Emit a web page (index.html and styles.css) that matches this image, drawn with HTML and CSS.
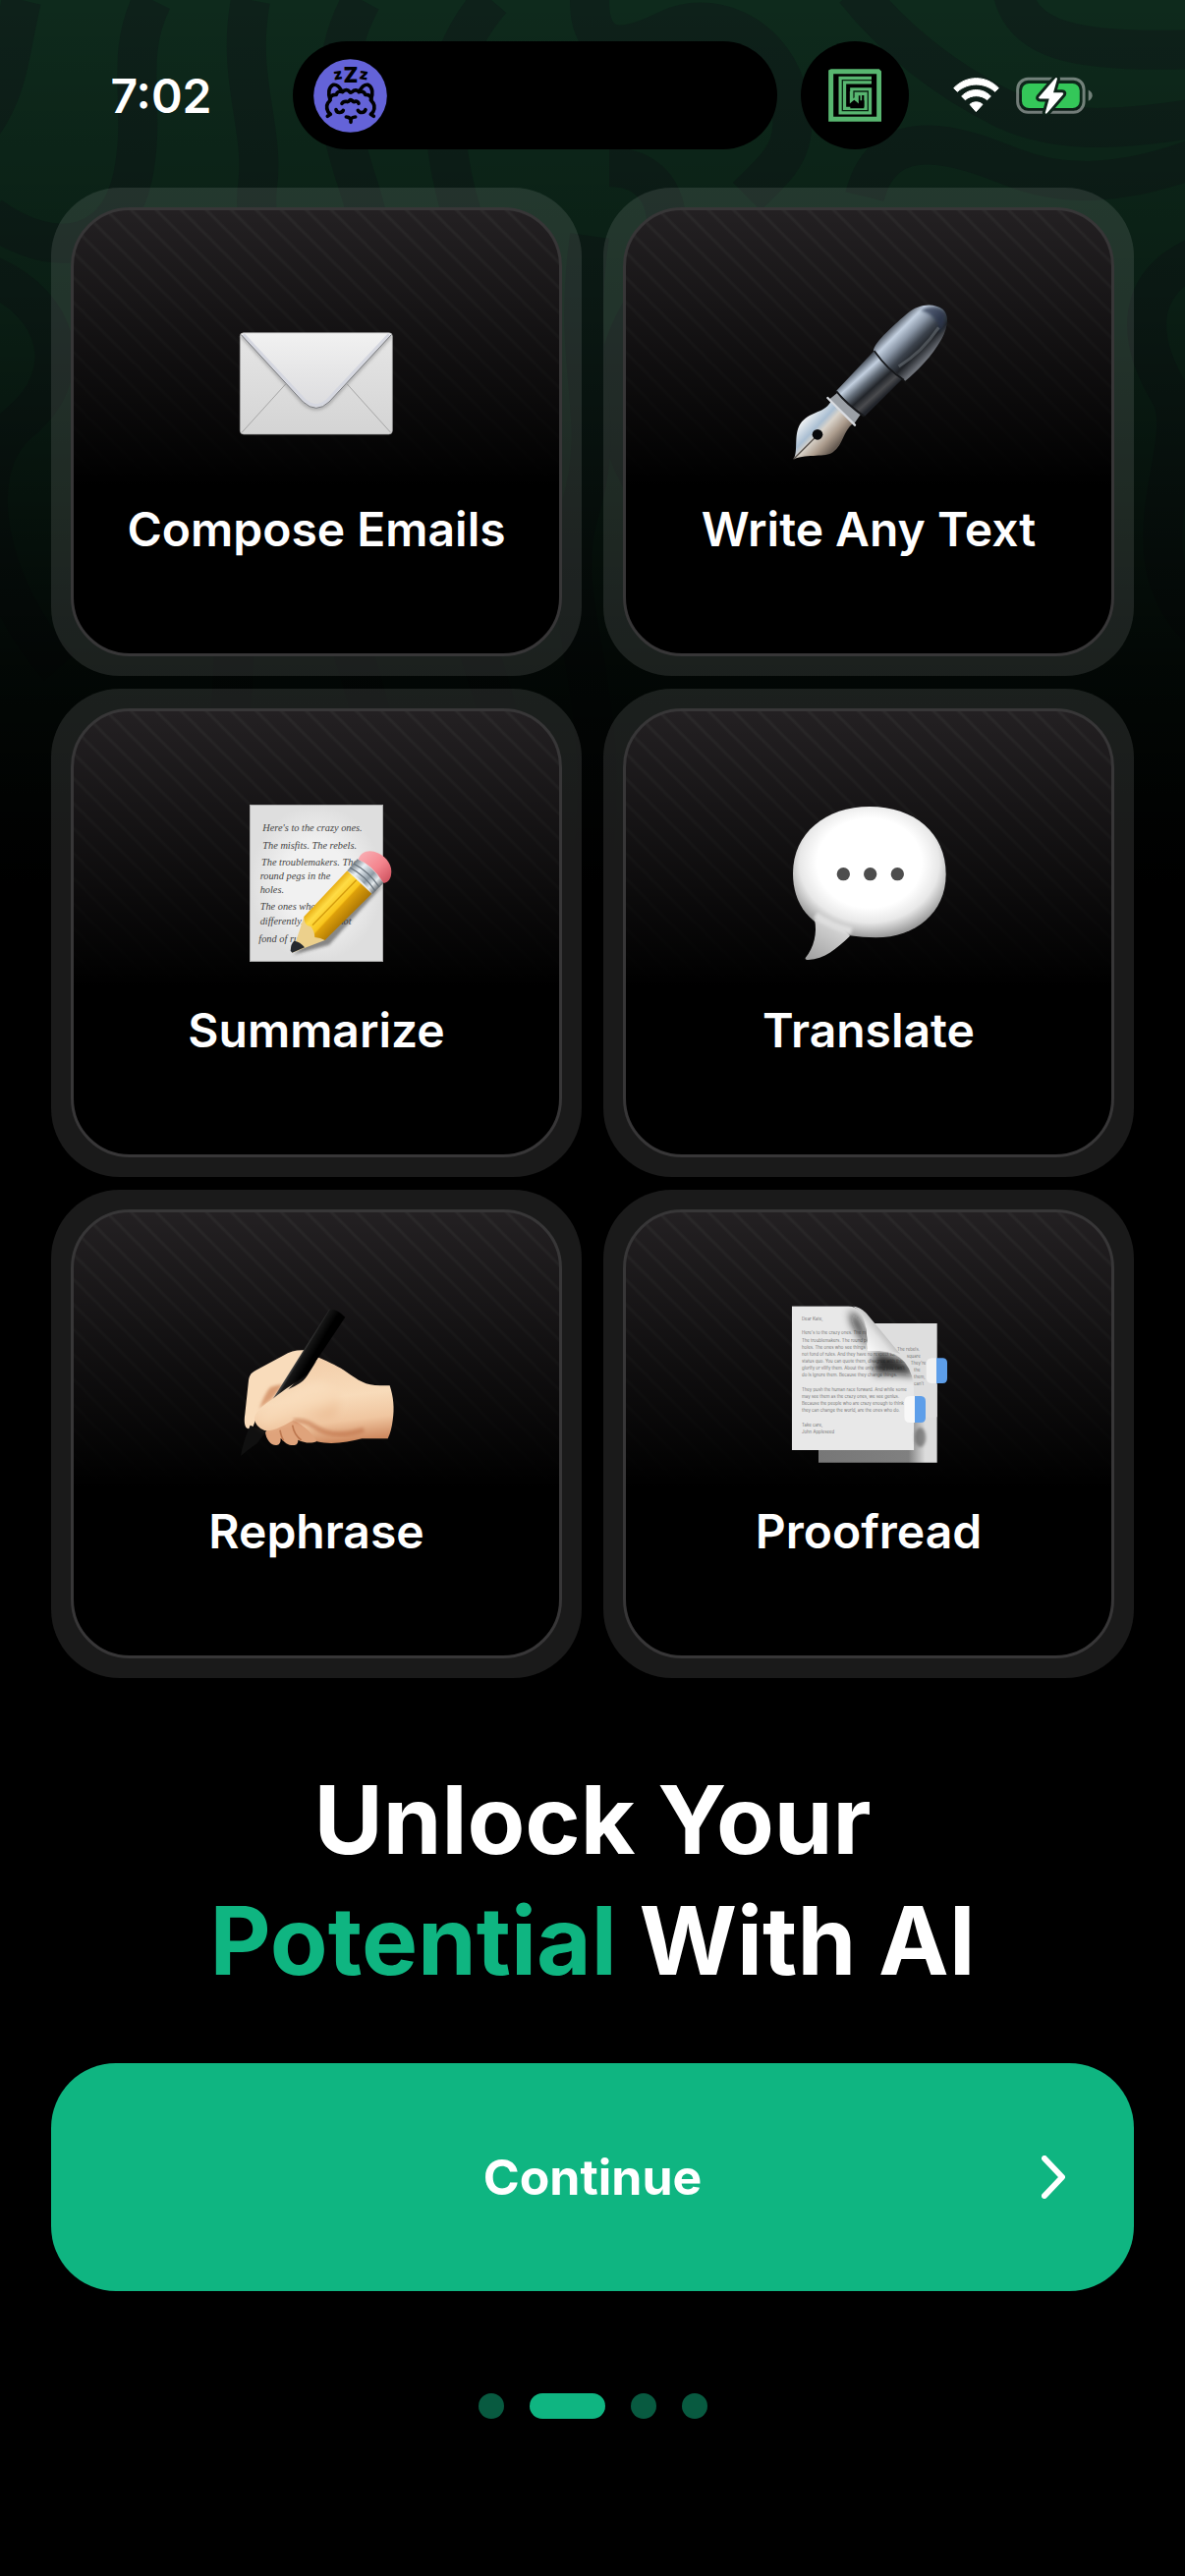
FILE: index.html
```
<!DOCTYPE html>
<html lang="en">

<head>
  <meta charset="UTF-8">
  <meta name="viewport" content="width=device-width">
  <title>Unlock Your Potential With AI</title>
  <link rel="stylesheet" href="styles.css">
</head>

<body>

  <svg class="backdrop" viewBox="0 0 1206 900" preserveAspectRatio="xMidYMin slice" aria-hidden="true">
    <defs>
      <linearGradient id="fade" x1="0" y1="0" x2="0" y2="1">
        <stop offset="0" stop-color="#000" stop-opacity="0" />
        <stop offset=".35" stop-color="#000" stop-opacity=".3" />
        <stop offset=".75" stop-color="#000" stop-opacity=".82" />
        <stop offset="1" stop-color="#000" />
      </linearGradient>
    </defs>
    <rect width="1206" height="900" fill="#0e2a1c" />
    <g fill="none" stroke="#0e211a" stroke-width="40">
      <path d="M22 0C10 50 10 90-20 130" />
      <path d="M155 0C125 60 150 110 135 180S60 270-10 220" />
      <path d="M255 0C240 80 270 130 262 190S300 300 250 420S280 620 200 900" />
      <path d="M368 0C330 70 345 130 365 190S400 380 350 500S420 700 380 900" />
      <path d="M500 0C440 70 450 140 465 200S520 340 470 480S560 700 500 900" />
      <path d="M600 0C600 60 640 50 680 30S780 30 800 90S790 170 760 200" />
      <path d="M620 170C680 170 700 230 650 320S640 480 700 560" />
      <path d="M870-10C910 40 960 80 1020 110S1150 130 1220 120" />
      <path d="M1030-10C1040 40 1090 55 1220 50" />
      <path d="M880 200C900 120 980 150 1030 170S1140 190 1220 160" />
      <path d="M-10 280C60 310 80 380 20 430S-10 600 60 680" />
      <path d="M1220 260C1150 290 1160 350 1190 400S1140 560 1220 640" />
      <path d="M600 240C580 380 620 420 590 520S630 700 600 900" />
    </g>
    <rect width="1206" height="900" fill="url(#fade)" />
  </svg>

  <header class="status">
    <div class="time">7:02</div>

    <div class="island">
      <svg class="cat" viewBox="87 90 225 225" aria-hidden="true">
        <circle cx="199.500" cy="202.500" r="112" fill="#6463d8" />
        <g class="zzz">
          <text x="162" y="153" font-size="46" transform="rotate(-8 162 140)">z</text>
          <text x="201" y="161" font-size="64">Z</text>
          <text x="240" y="153" font-size="46" transform="rotate(8 240 140)">z</text>
        </g>
        <g fill="none" stroke="#000" stroke-width="11" stroke-linecap="round" stroke-linejoin="round">
          <path d="M138 215C131 197 133 176 147 169C158 167 167 176 173 187" />
          <path d="M262 215C270 197 268 176 254 169C243 167 234 176 228 187" />
          <path d="M137 214C138 204 145 198 157 199C159 190 167 187 176 191C182 183 193 183 197 190Q201 194 206 190C212 183 222 185 226 191C235 187 243 191 245 199C257 198 263 205 264 214" />
          <path d="M137 218C125 228 127 242 132 252L139 259L130 265" />
          <path d="M264 218C275 228 274 242 269 252L262 259L271 265" />
          <path d="M174 226Q178 219 187 220Q194 222 197 217Q201 213 206 218Q211 223 216 219Q223 219 225 226" />
          <path d="M156 245C158 256 174 256 178 247M223 247C228 256 242 256 246 245" />
          <path d="M187 267Q194 267 201 273Q207 267 215 267M201 273V283" />
        </g>
      </svg>
    </div>

    <div class="bubble">
      <svg class="maze" viewBox="129 111 162 162" aria-hidden="true">
        <path d="M137 265V120L139 119H281L284 122V265Z" fill="none" stroke="#58b670" stroke-width="15" />
        <path d="M261 146H172V239H250V180H207V210M229 180V208" fill="none" stroke="#58b670" stroke-width="23" />
        <path d="M261 146H172V239H250V180H207V204" fill="none" stroke="#0b2413" stroke-width="4" />
        <path d="M219 192V215L208 205L196 216V232H238V192Z" />
        <path d="M197 180V212L208 202L219 212V190H229V208" fill="none" stroke="#58b670" stroke-width="5" />
      </svg>
    </div>

    <div class="signals">
      <svg class="wifi" viewBox="510 149 141 108" aria-hidden="true">
        <g fill="#fff" stroke="#fff" stroke-width="3" stroke-linejoin="round">
          <path d="M512 181C550 141 611 141 649 181L638 192C605 163 556 163 523 192Z" />
          <path d="M536 206C561 180 600 180 625 206L614 217C595 201 566 201 547 217Z" />
          <path d="M561 231C572 221 589 221 600 231L580 253Z" />
        </g>
      </svg>
      <svg class="battery" viewBox="702 144 234 118" aria-hidden="true">
        <rect x="706" y="151" width="204" height="103" rx="32" fill="none" stroke="#fff" stroke-opacity=".42" stroke-width="9" />
        <path d="M924 185Q936 192 936 202T924 219Z" fill="#fff" fill-opacity=".42" />
        <rect x="719" y="165" width="178" height="76" rx="22" fill="#34c759" />
        <path d="M823 148L772 207Q769 212 775 212H803L791 255Q792 261 797 256L846 199Q849 193 843 193H816L828 151Q827 145 823 148Z" fill="#fff" stroke="#0e251a" stroke-width="18" paint-order="stroke" />
      </svg>
    </div>
  </header>

  <main>
    <ul class="features">
      <li class="card">
        <div class="card-inner">
          <svg class="icon" viewBox="66 0 480 480" aria-hidden="true">
            <defs>
              <linearGradient id="paper" x1="0" y1="0" x2="0" y2="1">
                <stop offset="0" stop-color="#e6e6e6" />
                <stop offset="1" stop-color="#d4d4d4" />
              </linearGradient>
              <linearGradient id="flap" x1="0" y1="0" x2="0" y2="1">
                <stop offset="0" stop-color="#f1f1f1" />
                <stop offset="1" stop-color="#dcdcde" />
              </linearGradient>
              <filter id="soft" x="-20%" y="-20%" width="140%" height="140%">
                <feGaussianBlur stdDeviation="5" />
              </filter>
              <filter id="softer" x="-40%" y="-40%" width="180%" height="180%">
                <feGaussianBlur stdDeviation="12" />
              </filter>
            </defs>
            <rect x="73" y="89" width="465" height="310" rx="11" fill="url(#paper)" stroke="#aaa" stroke-width="2" />
            <path d="M78 394L212 246M533 394L400 246" stroke="#a5a5a5" stroke-width="3" />
            <path d="M77 99L266 304Q306 338 344 304L534 99" fill="none" stroke="#777" stroke-opacity=".5" stroke-width="9" filter="url(#soft)" />
            <path d="M76 92H535L345 300Q306 338 265 300Z" fill="url(#flap)" />
            <path d="M83 94L270 295Q306 326 340 295L528 94" fill="none" stroke="#d5d7e0" stroke-width="9" />
            <path d="M76 95L265 300Q306 338 345 300L535 95" fill="none" stroke="#787a80" stroke-width="3" />
          </svg>
          <h2>Compose Emails</h2>
        </div>
      </li>

      <li class="card">
        <div class="card-inner">
          <svg class="icon" viewBox="72 60 480 480" aria-hidden="true">
            <defs>
              <linearGradient id="barrel" gradientUnits="userSpaceOnUse" x1="270" y1="250" x2="355" y2="345">
                <stop offset="0" stop-color="#25282e" />
                <stop offset=".12" stop-color="#6b7582" />
                <stop offset=".28" stop-color="#c3d0e0" />
                <stop offset=".48" stop-color="#66707c" />
                <stop offset=".68" stop-color="#22252a" />
                <stop offset=".85" stop-color="#4a4b4e" />
                <stop offset="1" stop-color="#202329" />
              </linearGradient>
              <linearGradient id="cap" gradientUnits="userSpaceOnUse" x1="385" y1="130" x2="485" y2="230">
                <stop offset="0" stop-color="#59616c" />
                <stop offset=".18" stop-color="#c3d0e0" />
                <stop offset=".38" stop-color="#8a96a6" />
                <stop offset=".6" stop-color="#3c434d" />
                <stop offset=".78" stop-color="#202328" />
                <stop offset="1" stop-color="#6b6f76" />
              </linearGradient>
              <linearGradient id="nib" gradientUnits="userSpaceOnUse" x1="115" y1="410" x2="210" y2="500">
                <stop offset="0" stop-color="#f2f4f5" />
                <stop offset=".35" stop-color="#a9bed2" />
                <stop offset=".5" stop-color="#d9d3ca" />
                <stop offset=".75" stop-color="#ab9b8c" />
                <stop offset="1" stop-color="#655a51" />
              </linearGradient>
            </defs>
            <path d="M200 353L265 425C233 450 236 489 203 514C180 531 128 518 83 535C99 507 80 455 108 421C137 386 180 396 200 353Z" fill="url(#nib)" />
            <path d="M216 333L287 399L267 428L190 354Z" fill="#9ba0a6" />
            <path d="M187 348L270 431" stroke="#d8dbe0" stroke-width="7" stroke-linecap="round" />
            <path d="M83 535L155 463" stroke="#544e49" stroke-width="4" />
            <circle cx="156" cy="460" r="16" fill="#08090b" />
            <path d="M213 327L331 202L415 290L300 404Q255 370 213 327Z" fill="url(#barrel)" />
            <path d="M213 327Q248 371 298 404" fill="none" stroke="#17181b" stroke-width="6" />
            <path d="M327 205C325 181 395 120 431 89C462 62 510 55 539 78C561 98 552 136 535 168C505 222 459 268 424 296Q381 263 327 205Z" fill="url(#cap)" />
            <path d="M470 80C500 66 527 69 539 83C552 103 544 130 529 146C528 119 510 92 470 80Z" fill="#26344b" fill-opacity=".7" filter="url(#soft)" />
            <path d="M526 133Q475 208 404 252" stroke="#99a0a5" stroke-opacity=".35" stroke-width="9" fill="none" />
            <path d="M329 204Q371 264 420 293" fill="none" stroke="#141619" stroke-width="5" />
          </svg>
          <h2>Write Any Text</h2>
        </div>
      </li>

      <li class="card">
        <div class="card-inner">
          <svg class="icon" viewBox="36 60 480 480" aria-hidden="true">
            <defs>
              <radialGradient id="sheet">
                <stop offset=".5" stop-color="#f1f1f1" />
                <stop offset="1" stop-color="#dedede" />
              </radialGradient>
              <linearGradient id="wood" gradientUnits="userSpaceOnUse" x1="305" y1="330" x2="380" y2="400">
                <stop offset="0" stop-color="#e7ad14" />
                <stop offset=".22" stop-color="#ffdc45" />
                <stop offset=".55" stop-color="#f8c51c" />
                <stop offset=".6" stop-color="#dda00b" />
                <stop offset="1" stop-color="#ae7805" />
              </linearGradient>
              <linearGradient id="metal" gradientUnits="userSpaceOnUse" x1="390" y1="240" x2="465" y2="315">
                <stop offset="0" stop-color="#7b858d" />
                <stop offset=".25" stop-color="#e9f0f5" />
                <stop offset=".6" stop-color="#8e9aa4" />
                <stop offset=".8" stop-color="#e5eaed" />
                <stop offset="1" stop-color="#686e73" />
              </linearGradient>
              <linearGradient id="rubber" x1="0" y1="0" x2="1" y2="1">
                <stop offset="0" stop-color="#f9b3b8" />
                <stop offset=".55" stop-color="#f4848d" />
                <stop offset="1" stop-color="#c84b58" />
              </linearGradient>
            </defs>
            <rect x="73" y="61" width="406" height="478" fill="url(#sheet)" stroke="#b8b8b8" stroke-width="2" />
            <g class="script">
              <text x="112" y="142">Here's to the crazy ones.</text>
              <text x="112" y="195">The misfits. The rebels.</text>
              <text x="108" y="246">The troublemakers. The</text>
              <text x="104" y="288">round pegs in the</text>
              <text x="104" y="329">holes.</text>
              <text x="104" y="380">The ones who see</text>
              <text x="104" y="425">differently. They're not</text>
              <text x="100" y="481">fond of rules.</text>
            </g>
            <path d="M205 518L315 488L480 305L440 330Z" fill="#333" fill-opacity=".55" filter="url(#soft)" />
            <path d="M202 512L238 402L302 474Z" fill="#ecd08c" />
            <path d="M202 512L240 496Q226 478 208 476Q198 484 197 506Z" fill="#25292e" />
            <path d="M238 402L370 262L445 332L302 474Q289 466 271 465Q270 444 258 431Q239 433 238 402Z" fill="url(#wood)" />
            <path d="M264 428L398 290" stroke="#d49b0c" stroke-width="4" />
            <path d="M370 262L401 226Q444 245 481 299L447 333Q414 286 370 262Z" fill="url(#metal)" />
            <path d="M378 252Q425 277 456 324M389 240Q436 264 468 312" fill="none" stroke="#66717a" stroke-width="4" />
            <path d="M404 228C410 204 438 194 464 208C492 221 510 248 504 275C501 291 491 299 481 299Q445 242 404 228Z" fill="url(#rubber)" />
          </svg>
          <h2>Summarize</h2>
        </div>
      </li>

      <li class="card">
        <div class="card-inner">
          <svg class="icon" viewBox="72 60 480 480" aria-hidden="true">
            <defs>
              <radialGradient id="balloon" cx=".5" cy=".43" r=".57">
                <stop offset=".6" stop-color="#fff" />
                <stop offset=".8" stop-color="#e8e8e8" />
                <stop offset="1" stop-color="#9a9a9a" />
              </radialGradient>
              <linearGradient id="tail" x1="0" y1="1" x2=".7" y2="0">
                <stop offset="0" stop-color="#9e9e9e" />
                <stop offset="1" stop-color="#dcdcdc" />
              </linearGradient>
            </defs>
            <path d="M315 66C450 66 548 145 548 273C548 390 455 466 334 466Q294 466 254 460C130 440 81 361 81 270C81 147 181 66 315 66Z" fill="url(#balloon)" />
            <path d="M147 411C156 450 145 498 119 528Q117 534 128 534C177 532 215 499 255 461C236 437 176 404 147 411Z" fill="url(#tail)" />
            <path d="M150 398Q198 430 260 446" fill="none" stroke="#dedede" stroke-width="22" filter="url(#soft)" />
            <g fill="#4d4d4d">
              <circle cx="235" cy="272" r="20" />
              <circle cx="317" cy="272" r="20" />
              <circle cx="400" cy="272" r="20" />
            </g>
          </svg>
          <h2>Translate</h2>
        </div>
      </li>

      <li class="card">
        <div class="card-inner">
          <svg class="icon" viewBox="66 60 480 480" aria-hidden="true">
            <defs>
              <linearGradient id="palm" gradientUnits="userSpaceOnUse" x1="320" y1="230" x2="350" y2="480">
                <stop offset="0" stop-color="#f3cfab" />
                <stop offset=".45" stop-color="#f8dbba" />
                <stop offset=".75" stop-color="#f0c6a0" />
                <stop offset="1" stop-color="#cf8a60" />
              </linearGradient>
              <linearGradient id="thumb" gradientUnits="userSpaceOnUse" x1="210" y1="320" x2="250" y2="430">
                <stop offset="0" stop-color="#fbe2c4" />
                <stop offset=".6" stop-color="#f7d7b4" />
                <stop offset="1" stop-color="#e9b78d" />
              </linearGradient>
              <linearGradient id="ink" gradientUnits="userSpaceOnUse" x1="250" y1="200" x2="290" y2="224">
                <stop offset="0" stop-color="#8a8a8a" />
                <stop offset=".4" stop-color="#161616" />
                <stop offset="1" stop-color="#000" />
              </linearGradient>
            </defs>
            <path d="M150 447C153 468 166 487 184 486Q198 484 197 464C209 479 222 488 239 486Q251 483 250 470C270 479 289 482 308 474L285 400L170 420Z" fill="#dfa37b" />
            <path d="M195 440Q199 462 206 472M233 425Q238 455 260 471" fill="none" stroke="#bd7850" stroke-width="5" />
            <path d="M96 435C85 430 85 410 88 390L99 288C101 271 108 264 124 256L205 212C225 200 245 195 267 196L315 221L205 330L135 380Q120 405 113 428Q105 440 96 435Z" fill="#f9dcbb" />
            <path d="M132 375Q145 335 163 311Q180 302 205 300L170 345Z" fill="#d99c73" filter="url(#soft)" />
            <path d="M345 72Q365 66 394 95L288 255C270 285 226 299 173 345Z" fill="url(#ink)" />
            <path d="M104 425L151 446L125 481Q99 498 75 519Q80 480 104 425Z" fill="#101010" />
            <path d="M117 405C119 387 134 372 155 357L210 320C238 306 263 299 278 274L313 218C345 232 378 247 399 263C435 288 455 303 501 304H530C541 337 545 374 539 410Q535 443 524 466H445C403 476 354 486 308 475C296 454 271 425 235 410C205 426 175 445 148 441Q120 431 117 405Z" fill="url(#palm)" />
            <path d="M236 410Q269 407 302 430C342 459 394 457 451 439" fill="none" stroke="#bf7148" stroke-opacity=".55" stroke-width="16" filter="url(#soft)" />
            <path d="M135 405C137 387 150 377 165 365L215 335C245 315 280 300 310 295C380 300 391 360 364 393C321 421 270 380 229 402C200 417 175 431 148 427Q138 421 135 405Z" fill="url(#thumb)" fill-opacity=".8" filter="url(#softer)" />
          </svg>
          <h2>Rephrase</h2>
        </div>
      </li>

      <li class="card">
        <div class="card-inner">
          <svg class="icon" viewBox="72 60 480 480" aria-hidden="true">
            <defs>
              <linearGradient id="curl" gradientUnits="userSpaceOnUse" x1="305" y1="190" x2="365" y2="140">
                <stop offset="0" stop-color="#fafafa" />
                <stop offset=".6" stop-color="#e2e2e2" />
                <stop offset="1" stop-color="#b5b5b5" />
              </linearGradient>
              <linearGradient id="back" x1="0" y1="0" x2="1" y2="0">
                <stop offset="0" stop-color="#777" />
                <stop offset=".76" stop-color="#808080" />
                <stop offset=".9" stop-color="#dcdcdc" />
              </linearGradient>
              <clipPath id="front">
                <path d="M77 61H250Q290 64 303 110L308 198H345Q450 205 451 330V501H77Z" />
              </clipPath>
            </defs>
            <path d="M159 300H521V539H159Z" fill="url(#back)" />
            <path d="M330 114H521V400H400L300 190Z" fill="#dedede" />
            <g class="print">
              <text x="399" y="197">The rebels.</text>
              <text x="428" y="218">square</text>
              <text x="440" y="240">They're</text>
              <text x="450" y="261">the</text>
              <text x="450" y="282">them,</text>
              <text x="450" y="302">can't</text>
            </g>
            <g clip-path="url(#front)">
              <rect x="77" y="61" width="380" height="440" fill="#e8e8e8" />
              <g class="print">
                <text x="108" y="105">Dear Kate,</text>
                <text x="108" y="148">Here's to the crazy ones. The misfits.</text>
                <text x="108" y="170">The troublemakers. The round pegs</text>
                <text x="108" y="192">holes. The ones who see things diff</text>
                <text x="108" y="213">not fond of rules. And they have no respect for the</text>
                <text x="108" y="235">status quo. You can quote them, disagree with them,</text>
                <text x="108" y="256">glorify or vilify them. About the only thing you can't</text>
                <text x="108" y="277">do is ignore them. Because they change things.</text>
                <text x="108" y="320">They push the human race forward. And while some</text>
                <text x="108" y="342">may see them as the crazy ones, we see genius.</text>
                <text x="108" y="364">Because the people who are crazy enough to think</text>
                <text x="108" y="385">they can change the world, are the ones who do.</text>
                <text x="108" y="428">Take care,</text>
                <text x="108" y="450">John Appleseed</text>
              </g>
              <path d="M255 75Q292 90 315 190Q285 160 260 110ZM330 205Q430 210 455 275Q400 265 330 270Z" fill="#111" fill-opacity=".85" filter="url(#softer)" />
            </g>
            <path d="M265 62C285 64 297 74 306 84L408 207C380 197 340 198 309 198C306 165 312 85 265 62Z" fill="url(#curl)" />
            <path d="M488 239Q488 220 506 220H519V297H506Q488 297 488 278Z" fill="#f1f1f1" />
            <path d="M519 220H540Q552 221 552 235V282Q552 297 538 297H519Z" fill="#5d9ee9" />
            <path d="M421 355Q421 336 438 336H453V417H438Q421 417 421 398Z" fill="#f8f8f8" />
            <path d="M453 336H472Q486 337 486 352V402Q486 417 471 417H453Z" fill="#5d9ee9" />
            <ellipse cx="470" cy="462" rx="17" ry="30" fill="#555" fill-opacity=".6" filter="url(#soft)" />
          </svg>
          <h2>Proofread</h2>
        </div>
      </li>
    </ul>

    <h1>Unlock Your<br><span class="accent">Potential</span> With AI</h1>

    <button class="continue" type="button">
      <span>Continue</span>
      <svg class="chevron" viewBox="0 0 24 44" aria-hidden="true">
        <path d="M3 3L21 22L3 41" fill="none" stroke="#fff" stroke-width="6" stroke-linecap="round" stroke-linejoin="round" />
      </svg>
    </button>

    <nav class="dots">
      <button type="button" aria-label="Page 1"></button>
      <button type="button" aria-label="Page 2" class="active"></button>
      <button type="button" aria-label="Page 3"></button>
      <button type="button" aria-label="Page 4"></button>
    </nav>
  </main>

</body>

</html>
```
FILE: styles.css
```
* {
  box-sizing: border-box;
  margin: 0;
  padding: 0;
}

body {
  position: relative;
  min-height: 100vh;
  background-color: #000;
  color: #fff;
  font-family: Inter, "Liberation Sans", sans-serif;
}

button {
  border: none;
  font-family: inherit;
  color: inherit;
  cursor: pointer;
}

svg {
  display: block;
  flex-shrink: 0;
}

.backdrop {
  position: absolute;
  top: 0;
  left: 0;
  z-index: -1;
  width: 100%;
  height: 900px;
}

/* status bar */

.status {
  display: grid;
  grid-template-columns: 1fr 493px 134px 1fr;
  align-items: center;
  padding: 42px 0 39px 16px;
}

.time {
  padding-right: 82px;
  font-size: 48px;
  font-weight: 600;
  text-align: right;
}

.island {
  display: flex;
  align-items: center;
  height: 110px;
  padding-left: 21px;
  border-radius: 55px;
  background-color: #000;
}

.cat {
  width: 75px;
  height: 75px;
}

.zzz {
  font-weight: 900;
  text-anchor: middle;
}

.bubble {
  display: flex;
  align-items: center;
  justify-content: center;
  width: 110px;
  height: 110px;
  margin-left: 24px;
  border-radius: 50%;
  background-color: #000;
}

.maze {
  width: 54px;
  height: 54px;
}

.signals {
  display: flex;
  align-items: center;
  gap: 17px;
  padding-left: 45px;
}

.wifi {
  width: 47px;
  height: 36px;
}

.battery {
  width: 78px;
  height: 39px;
}

/* content */

main {
  padding: 0 52px 160px;
}

.features {
  display: grid;
  grid-template-columns: 1fr 1fr;
  gap: 13px 22px;
  list-style: none;
}

.card {
  padding: 20px;
  border-radius: 70px;
  background-color: rgba(255, 255, 255, 0.1);
}

.card-inner {
  display: flex;
  flex-direction: column;
  align-items: center;
  gap: 40px;
  padding: 95px 0 96px;
  border: 3px solid #373637;
  border-radius: 60px;
  background:
    linear-gradient(to bottom, rgba(0, 0, 0, 0), #000 62%),
    repeating-linear-gradient(45deg, #2b292a 0, #2b292a 1px, #232022 3px, #232022 16px, #2b292a 18px);
}

.icon {
  width: 160px;
  height: 160px;
}

.script {
  font-family: "Liberation Serif", serif;
  font-size: 31px;
  font-style: italic;
  fill: #444;
}

.print {
  font-size: 13px;
  fill: #777;
}

h2 {
  font-size: 48px;
  font-weight: 600;
  line-height: 60px;
}

h1 {
  margin-top: 83px;
  font-size: 96px;
  font-weight: 700;
  line-height: 123px;
  text-align: center;
}

.accent {
  color: #0fb581;
}

.continue {
  display: grid;
  grid-template-columns: 1fr auto 1fr;
  align-items: center;
  width: 100%;
  margin-top: 63px;
  padding: 84px 70px;
  border-radius: 66px;
  background-color: #0fb581;
  font-size: 50px;
  font-weight: 700;
  line-height: 64px;
}

.continue span {
  grid-column: 2;
}

.chevron {
  width: 24px;
  height: 44px;
  justify-self: end;
}

.dots {
  display: flex;
  justify-content: center;
  gap: 26px;
  margin-top: 104px;
}

.dots button {
  width: 26px;
  height: 26px;
  border-radius: 13px;
  background-color: #085a40;
}

.dots .active {
  width: 77px;
  background-color: #0fb581;
}
```
